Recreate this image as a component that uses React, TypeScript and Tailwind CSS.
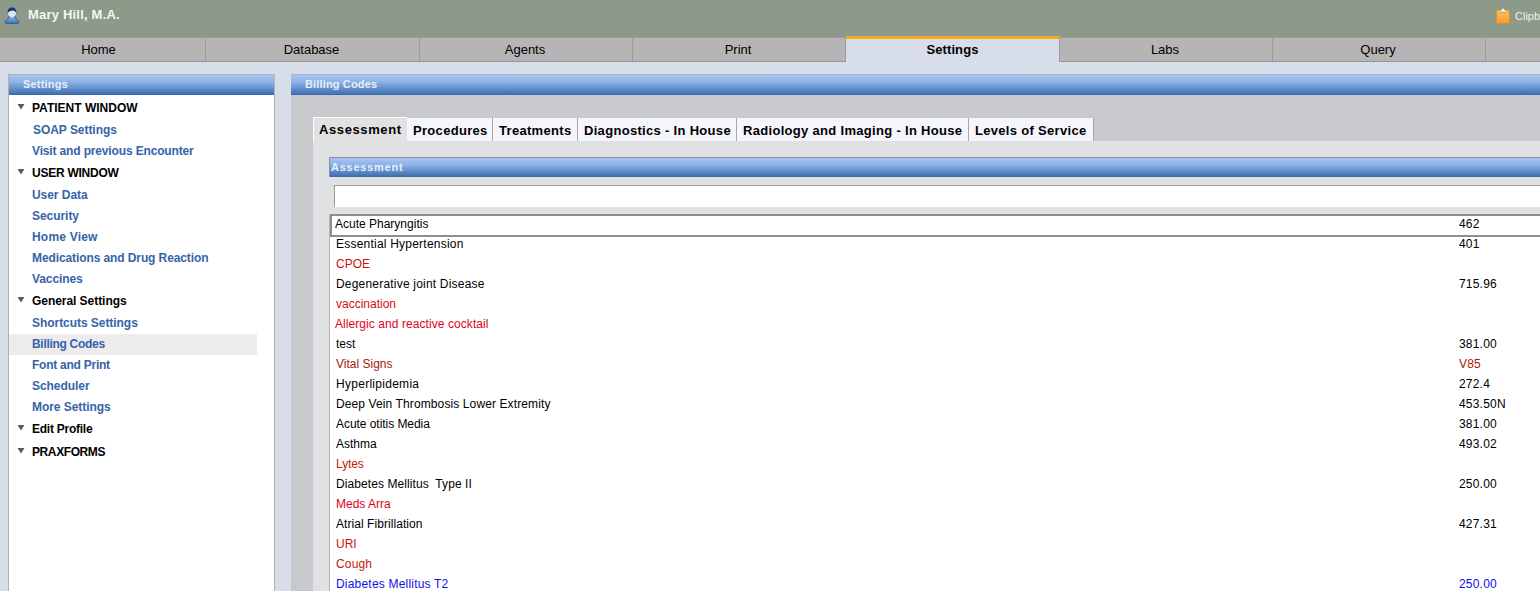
import React from "react";

const font = "font-['Liberation_Sans',Arial,sans-serif]";
const barGrad = "bg-[linear-gradient(#a4c5f3,#8eb3e6_35%,#5f8cc8_70%,#3c69ad)]";

const navs: [string, string][] = [
  ["Home", "w-[206px] pr-2"],
  ["Database", "w-[214px] pr-[2px]"],
  ["Agents", "w-[213px] pr-[2px]"],
  ["Print", "w-[213px] pr-[2px]"],
  ["Settings", "w-[214px]"],
  ["Labs", "w-[213px] pr-[2px]"],
  ["Query", "w-[213px] pr-[2px]"],
  ["", "w-[55px]"],
];

const side: { title: string; cls: string; items: [string, string][] }[] = [
  {
    title: "PATIENT WINDOW",
    cls: "",
    items: [
      ["SOAP Settings", "h-[21px] pl-[24px] tracking-[-0.05px]"],
      ["Visit and previous Encounter", "h-[21px] pl-[23px] tracking-[-0.15px]"],
    ],
  },
  {
    title: "USER WINDOW",
    cls: "mt-px tracking-[-0.25px]",
    items: [
      ["User Data", "h-[21px] pl-[23px] tracking-[-0.05px]"],
      ["Security", "h-[21px] pl-[23px] tracking-[-0.05px]"],
      ["Home View", "h-[21px] pl-[23px] tracking-[0.2px]"],
      ["Medications and Drug Reaction", "h-[21px] pl-[23px] tracking-[-0.1px]"],
      ["Vaccines", "h-[21px] pl-[23px] tracking-[-0.1px]"],
    ],
  },
  {
    title: "General Settings",
    cls: "mt-px tracking-[-0.05px]",
    items: [
      ["Shortcuts Settings", "h-[22px] pb-px pl-[23px] tracking-[-0.05px]"],
      ["Billing Codes", "h-[21px] pb-[2px] pl-[23px] bg-[#edebec] tracking-[-0.3px]"],
      ["Font and Print", "h-[20px] pb-px pl-[23px] tracking-[-0.25px]"],
      ["Scheduler", "h-[21px] pl-[23px] tracking-[-0.05px]"],
      ["More Settings", "h-[21px] pl-[23px]"],
    ],
  },
  { title: "Edit Profile", cls: "mt-px tracking-[-0.25px]", items: [] },
  { title: "PRAXFORMS", cls: "mt-px tracking-[-0.4px]", items: [] },
];

const tabs: [string, string][] = [
  ["Procedures", "w-[86px]"],
  ["Treatments", "w-[85px]"],
  ["Diagnostics - In House", "w-[159px]"],
  ["Radiology and Imaging - In House", "w-[232px]"],
  ["Levels of Service", "w-[125px]"],
];

const rows: [string, string, string, string][] = [
  ["Essential Hypertension", "401", "text-black", "tracking-[0.22px]"],
  ["CPOE", "", "text-[#d01010]", ""],
  ["Degenerative joint Disease", "715.96", "text-black", "tracking-[0.2px]"],
  ["vaccination", "", "text-[#d01010]", ""],
  ["Allergic and reactive cocktail", "", "text-[#e00020] -ml-px", "tracking-[0.07px]"],
  ["test", "381.00", "text-black", ""],
  ["Vital Signs", "V85", "text-[#a81808]", ""],
  ["Hyperlipidemia", "272.4", "text-black", "tracking-[0.28px]"],
  ["Deep Vein Thrombosis Lower Extremity", "453.50N", "text-black", "tracking-[0.11px]"],
  ["Acute otitis Media", "381.00", "text-black", "tracking-[-0.05px]"],
  ["Asthma", "493.02", "text-black", ""],
  ["Lytes", "", "text-[#c02008]", "tracking-[-0.1px]"],
  ["Diabetes Mellitus  Type II", "250.00", "text-black", "tracking-[0.08px]"],
  ["Meds Arra", "", "text-[#e00020]", ""],
  ["Atrial Fibrillation", "427.31", "text-black", "tracking-[0.06px]"],
  ["URI", "", "text-[#d01010]", ""],
  ["Cough", "", "text-[#c02008]", "tracking-[0.15px]"],
  ["Diabetes Mellitus T2", "250.00", "text-[#1010e8]", "tracking-[0.2px]"],
];

function Tri() {
  return (
    <svg width="8" height="7" viewBox="0 0 8 7" className="shrink-0">
      <path d="M0.5 1h7L4 6.5z" fill="#5a5a5a" />
    </svg>
  );
}

export default function App() {
  return (
    <div className={`${font} h-[591px] w-[1540px] overflow-hidden bg-[#d7deea] text-black`}>
      {/* top bar */}
      <div className="flex h-[37px] items-start justify-between overflow-hidden bg-[#8d9a8a] pt-[5px]">
        <div className="flex items-center">
          <svg width="16" height="17" viewBox="0 0 16 17" className="ml-1">
            <defs>
              <linearGradient id="ub" x1="0" y1="0" x2="0" y2="1">
                <stop offset="0" stopColor="#8fb4e4" />
                <stop offset="1" stopColor="#3b6db5" />
              </linearGradient>
            </defs>
            <path d="M5 9.5h6l1 2.5 3 2.5v1.2L13.5 16.5h-11L1 15.7v-1.2L4 12z" fill="url(#ub)" stroke="#2a5596" strokeWidth="0.8" />
            <ellipse cx="8" cy="6" rx="4" ry="4.4" fill="#d8e6f6" />
            <path d="M3.6 6C3.4 2.2 5.6.5 8 .5s4.6 1.7 4.4 5.5C11.6 4.6 10.4 3.6 8.6 3.6 6.6 3.6 5 4.6 3.6 6z" fill="#173a70" />
          </svg>
          <span className="ml-2 text-[13px] font-bold leading-[20px] tracking-[0.2px] text-[#f4f6f2]">Mary Hill, M.A.</span>
        </div>
        <div className="mt-[2px] flex w-[44px] shrink-0 items-center overflow-hidden whitespace-nowrap">
          <svg width="14" height="17" viewBox="0 0 14 17" className="shrink-0">
            <defs>
              <linearGradient id="cb" x1="0" y1="0" x2="0" y2="1">
                <stop offset="0" stopColor="#fbc06a" />
                <stop offset="1" stopColor="#f79a2c" />
              </linearGradient>
            </defs>
            <rect x="0.5" y="3" width="13" height="13.5" rx="1" fill="url(#cb)" stroke="#e08a20" />
            <path d="M3.5 5V3h2c0-2.4 3-2.4 3 0h2v2z" fill="#f6f6f6" stroke="#7d7d70" strokeWidth="0.5" />
          </svg>
          <span className="ml-[5px] text-[11px] leading-[16px] text-[#eef2ee]">Clipboard</span>
        </div>
      </div>
      {/* nav */}
      <div className="flex h-[25px] items-stretch">
        {navs.map(([n, w], i) =>
          n === "Settings" ? (
            <div key={i} className={`${w} -mt-px h-[26px] shrink-0 border-t-[3px] border-r border-[#f9a825] border-r-[#a09c9c] bg-[#d7deea] text-center text-[13px] font-bold leading-[21px] tracking-[0.1px]`}>
              {n}
            </div>
          ) : (
            <div key={i} className={`${w} shrink-0 border-t border-r border-b border-[#a09c9c] border-b-[#979597] bg-[#b6b4b4] text-center text-[13px] leading-[23px]`}>
              {n}
            </div>
          )
        )}
      </div>
      {/* body */}
      <div className="flex pt-3">
        {/* sidebar */}
        <div className="ml-2 h-[520px] w-[267px] shrink-0 border-x border-t border-[#aeb0b4] bg-white">
          <div className={`${barGrad} h-5 pl-[14px] text-[11px] font-bold leading-[19px] tracking-[0.2px] text-[#e6effc]`}>Settings</div>
          <div className="mt-px border-t border-white">
            {side.map((g) => (
              <div key={g.title} className={g.cls}>
                <div className="flex h-[22px] items-center pl-2">
                  <span className="-mt-[3px] w-[15px]"><Tri /></span>
                  <span className="text-[12px] font-bold">{g.title}</span>
                </div>
                {g.items.map(([it, c]) => (
                  <div key={it} className={`flex w-[248px] items-center text-[12px] font-bold text-[#3564a8] ${c}`}>
                    {it}
                  </div>
                ))}
              </div>
            ))}
          </div>
        </div>
        {/* main */}
        <div className="ml-4 h-[520px] flex-1 border-t border-[#aeb0b4] bg-[#c8c9cc]">
          <div className={`${barGrad} h-5 pl-[14px] text-[11px] font-bold leading-[19px] tracking-[0.15px] text-[#e6effc]`}>Billing Codes</div>
          <div className="ml-[22px] pt-[22px]">
            {/* tabs */}
            <div className="flex h-6 items-end">
              <div className="h-6 w-[94px] border-t border-l border-white bg-[#e0e1e3] pt-[2px] pl-[5px] text-[13px] font-bold tracking-[0.6px]">Assessment</div>
              {tabs.map(([t, w]) => (
                <div key={t} className={`${w} h-[23px] shrink-0 whitespace-nowrap border-r border-[#a8a8ac] bg-[#f5f5fc] pt-[3px] pl-[6px] text-[13px] font-bold leading-[19px] tracking-[0.31px]`}>{t}</div>
              ))}
            </div>
            {/* panel */}
            <div className="h-[500px] bg-[#e0e1e3] pt-4 pl-[16px]">
              <div className={`${barGrad} h-5 border-t border-l border-[#8f9096] pl-px text-[11px] font-bold leading-[18px] tracking-[0.75px] text-[#e6effc]`}>Assessment</div>
              <div className="pt-2 pl-[5px]">
                <div className="h-[22px] border-t border-l border-[#9a9a9a] bg-white" />
              </div>
              <div className="mt-[7px] h-[400px] overflow-hidden border-l border-[#b5b5b5] bg-white">
                <div className="relative flex h-5 items-center pl-[5px] text-[12px]">
                  <span className="w-[1124px]">Acute Pharyngitis</span>
                  <span className="tracking-[0.2px]">462</span>
                  <div className="absolute inset-x-0 top-0 h-[23px] border-y-2 border-l-2 border-[#8e8e8e]" />
                </div>
                {rows.map(([name, code, c, t], i) => (
                  <div key={i} className={`flex h-5 items-center whitespace-pre pl-[6px] text-[12px] ${c}`}>
                    <span className={`w-[1123px] ${t}`}>{name}</span>
                    <span className="tracking-[0.2px]">{code}</span>
                  </div>
                ))}
              </div>
            </div>
          </div>
        </div>
      </div>
    </div>
  );
}
